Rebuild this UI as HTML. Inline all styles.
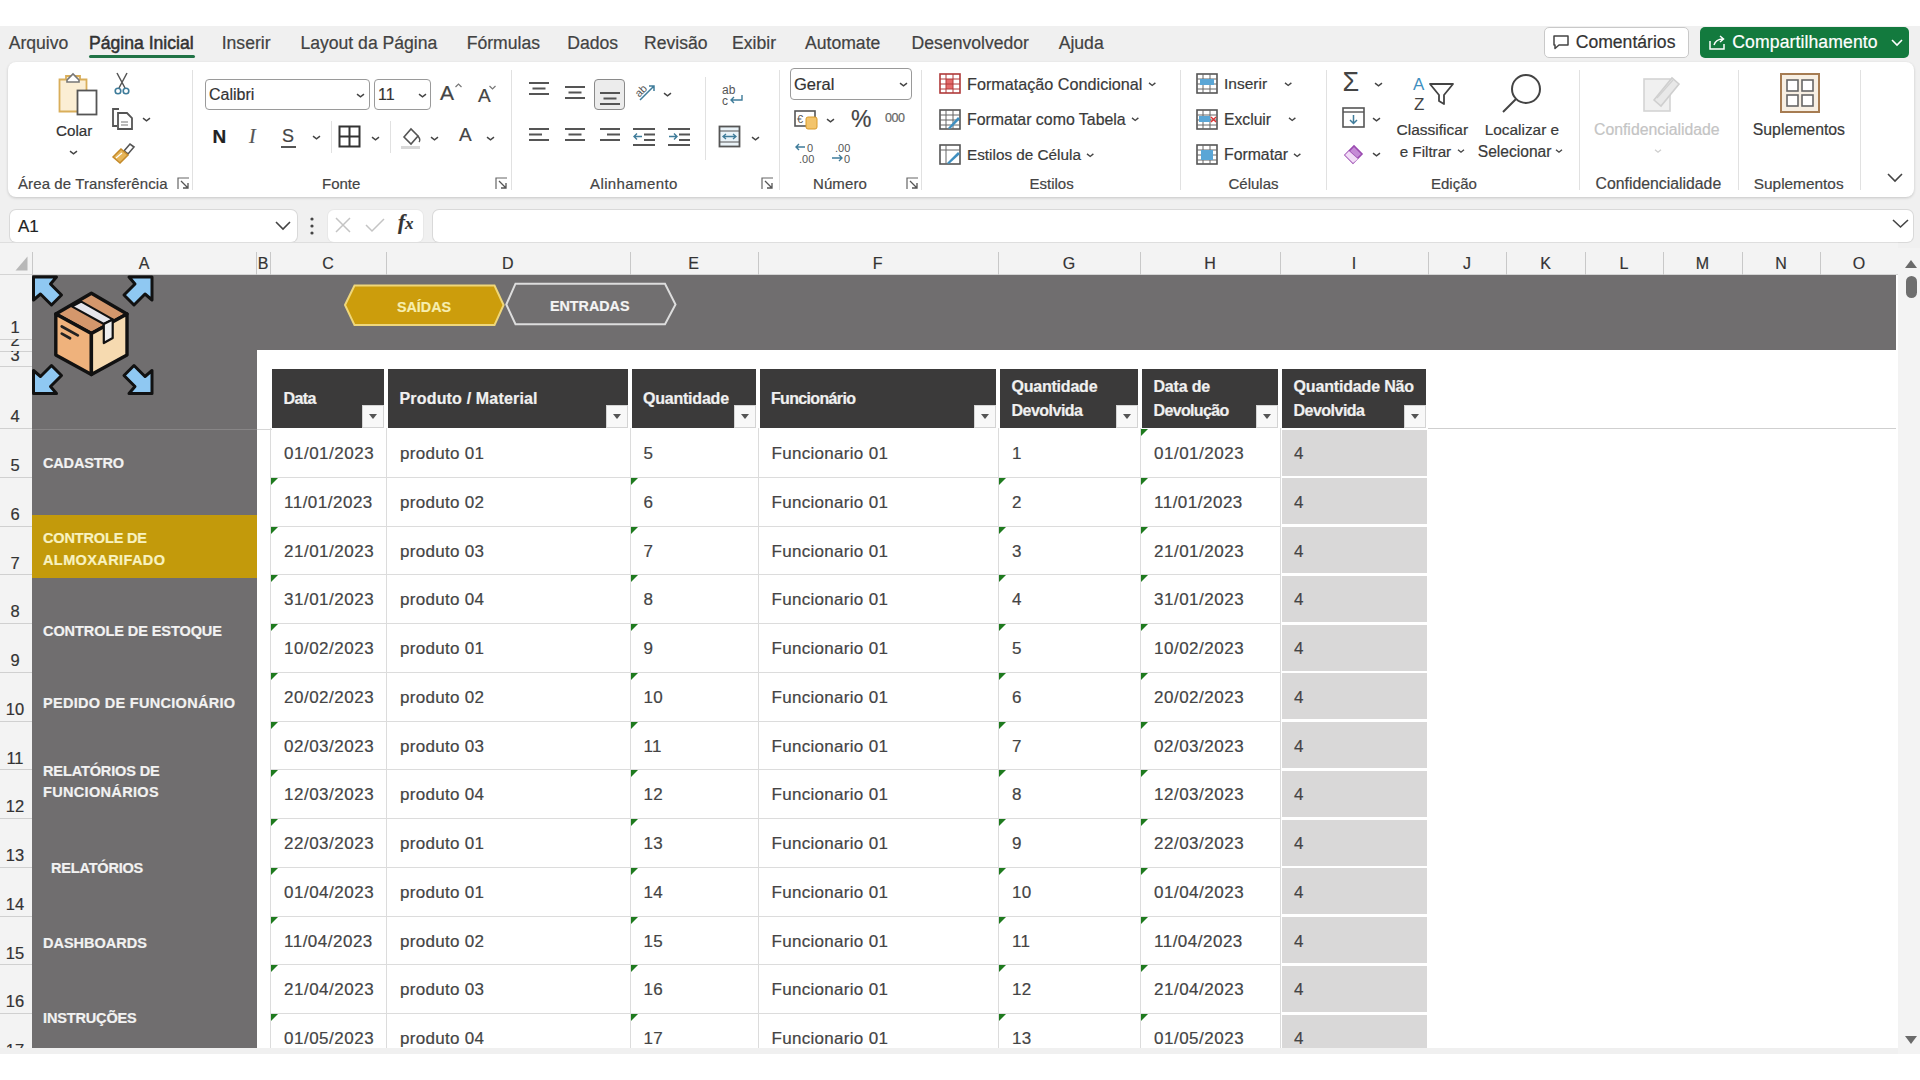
<!DOCTYPE html><html><head><meta charset='utf-8'><style>
*{margin:0;padding:0;box-sizing:border-box}
html,body{width:1920px;height:1080px;overflow:hidden;background:#fff;font-family:"Liberation Sans", sans-serif;}
.a{position:absolute}
.t{position:absolute;white-space:nowrap;line-height:1;-webkit-text-stroke:0.2px currentColor}
</style></head><body>
<div class='a' style='left:0;top:26px;width:1920px;height:1028px;background:#f0f0f0'></div>
<div class='t' style='left:8.7px;top:34.5px;font-size:17.6px;color:#424242;-webkit-text-stroke:0.2px #424242'>Arquivo</div>
<div class='t' style='left:89px;top:34.5px;font-size:17.6px;color:#424242;-webkit-text-stroke:0.2px #424242;-webkit-text-stroke:0.5px #333;color:#333'>Página Inicial</div>
<div class='t' style='left:221.7px;top:34.5px;font-size:17.6px;color:#424242;-webkit-text-stroke:0.2px #424242'>Inserir</div>
<div class='t' style='left:300.4px;top:34.5px;font-size:17.6px;color:#424242;-webkit-text-stroke:0.2px #424242'>Layout da Página</div>
<div class='t' style='left:466.7px;top:34.5px;font-size:17.6px;color:#424242;-webkit-text-stroke:0.2px #424242'>Fórmulas</div>
<div class='t' style='left:567.2px;top:34.5px;font-size:17.6px;color:#424242;-webkit-text-stroke:0.2px #424242'>Dados</div>
<div class='t' style='left:644px;top:34.5px;font-size:17.6px;color:#424242;-webkit-text-stroke:0.2px #424242'>Revisão</div>
<div class='t' style='left:732px;top:34.5px;font-size:17.6px;color:#424242;-webkit-text-stroke:0.2px #424242'>Exibir</div>
<div class='t' style='left:805px;top:34.5px;font-size:17.6px;color:#424242;-webkit-text-stroke:0.2px #424242'>Automate</div>
<div class='t' style='left:911.6px;top:34.5px;font-size:17.6px;color:#424242;-webkit-text-stroke:0.2px #424242'>Desenvolvedor</div>
<div class='t' style='left:1058.7px;top:34.5px;font-size:17.6px;color:#424242;-webkit-text-stroke:0.2px #424242'>Ajuda</div>
<div class='a' style='left:89px;top:55px;width:106px;height:3px;background:#217346;border-radius:2px'></div>
<div class='a' style='left:8px;top:62px;width:1906px;height:135px;background:#fff;border-radius:8px;box-shadow:0 1px 3px rgba(0,0,0,0.18)'></div>
<div class='t' style='left:18px;top:176px;font-size:15px;color:#444;letter-spacing:0.1px'>Área de Transferência</div>
<svg class='a' style='left:176.5px;top:177px;' width='13' height='13' viewBox='0 0 13 13'><path d='M1 12 V1 H12' fill='none' stroke='#666' stroke-width='1.2'/><path d='M4 4 L11 11 M11 6 V11 H6' fill='none' stroke='#555' stroke-width='1.3'/></svg>
<div class='t' style='left:322px;top:176px;font-size:15px;color:#444'>Fonte</div>
<svg class='a' style='left:495px;top:177px;' width='13' height='13' viewBox='0 0 13 13'><path d='M1 12 V1 H12' fill='none' stroke='#666' stroke-width='1.2'/><path d='M4 4 L11 11 M11 6 V11 H6' fill='none' stroke='#555' stroke-width='1.3'/></svg>
<div class='t' style='left:590px;top:176px;font-size:15px;color:#444;letter-spacing:0.4px'>Alinhamento</div>
<svg class='a' style='left:761px;top:177px;' width='13' height='13' viewBox='0 0 13 13'><path d='M1 12 V1 H12' fill='none' stroke='#666' stroke-width='1.2'/><path d='M4 4 L11 11 M11 6 V11 H6' fill='none' stroke='#555' stroke-width='1.3'/></svg>
<div class='t' style='left:813px;top:176px;font-size:15px;color:#444;letter-spacing:0.1px'>Número</div>
<svg class='a' style='left:906px;top:177px;' width='13' height='13' viewBox='0 0 13 13'><path d='M1 12 V1 H12' fill='none' stroke='#666' stroke-width='1.2'/><path d='M4 4 L11 11 M11 6 V11 H6' fill='none' stroke='#555' stroke-width='1.3'/></svg>
<div class='t' style='left:1029.5px;top:176px;font-size:15px;color:#444'>Estilos</div>
<div class='t' style='left:1228.5px;top:176px;font-size:15px;color:#444'>Células</div>
<div class='t' style='left:1431px;top:176px;font-size:15px;color:#444'>Edição</div>
<div class='t' style='left:1595.6px;top:176px;font-size:15px;color:#444;font-size:15.8px'>Confidencialidade</div>
<div class='t' style='left:1753.75px;top:176px;font-size:15px;color:#444;font-size:15.4px'>Suplementos</div>
<svg class='a' style='left:1885px;top:172px;' width='20' height='12' viewBox='0 0 20 12'><path d='M3 2 L10 9 L17 2' fill='none' stroke='#444' stroke-width='1.6'/></svg>
<div class='a' style='left:191.6px;top:70px;width:1px;height:120px;background:#e1e1e1'></div>
<div class='a' style='left:511px;top:70px;width:1px;height:120px;background:#e1e1e1'></div>
<div class='a' style='left:778.6px;top:70px;width:1px;height:120px;background:#e1e1e1'></div>
<div class='a' style='left:921px;top:70px;width:1px;height:120px;background:#e1e1e1'></div>
<div class='a' style='left:1180px;top:70px;width:1px;height:120px;background:#e1e1e1'></div>
<div class='a' style='left:1326px;top:70px;width:1px;height:120px;background:#e1e1e1'></div>
<div class='a' style='left:1579px;top:70px;width:1px;height:120px;background:#e1e1e1'></div>
<div class='a' style='left:1738px;top:70px;width:1px;height:120px;background:#e1e1e1'></div>
<div class='a' style='left:1860px;top:70px;width:1px;height:120px;background:#e1e1e1'></div>
<svg class='a' style='left:56px;top:71px;' width='44' height='46' viewBox='0 0 44 46'><path d='M3.5 8.5 H10 V5 H24 V8.5 H30.5 V40.5 H3.5 Z' fill='#fbeed4' stroke='#d9ae5a' stroke-width='1.8'/><path d='M11 9 L17 3 L23 9 V11 H11 Z' fill='#fff' stroke='#777' stroke-width='1.6'/><rect x='21.5' y='19.5' width='19' height='24' fill='#fff' stroke='#555' stroke-width='1.8'/></svg>
<div class='t' style='left:56px;top:123px;font-size:15.2px;color:#333'>Colar</div>
<svg class='a' style='left:68.5px;top:148.5px;' width='9.0' height='7.0' viewBox='0 0 9.0 7.0'><path d='M1 2.1 L4.5 4.8999999999999995 L8.0 2.1' fill='none' stroke='#444' stroke-width='1.4'/></svg>
<svg class='a' style='left:113px;top:72px;' width='18' height='24' viewBox='0 0 18 24'><path d='M4 1 L12 16 M14 1 L6 16' stroke='#555' stroke-width='1.5' fill='none'/><circle cx='5' cy='19' r='2.8' fill='none' stroke='#3f7c9a' stroke-width='1.6'/><circle cx='13' cy='19' r='2.8' fill='none' stroke='#3f7c9a' stroke-width='1.6'/></svg>
<svg class='a' style='left:110px;top:107px;' width='26' height='24' viewBox='0 0 26 24'><path d='M9 2 H3 V19 H7' fill='none' stroke='#555' stroke-width='1.8'/><path d='M8 6 H17 L22 11 V22 H8 Z' fill='#fff' stroke='#555' stroke-width='1.8'/><path d='M11 15 H18 M11 18 H18' stroke='#777' stroke-width='1.2'/></svg>
<svg class='a' style='left:142.0px;top:115.5px;' width='9.0' height='7.0' viewBox='0 0 9.0 7.0'><path d='M1 2.1 L4.5 4.8999999999999995 L8.0 2.1' fill='none' stroke='#444' stroke-width='1.4'/></svg>
<svg class='a' style='left:110px;top:141px;' width='26' height='24' viewBox='0 0 26 24'><path d='M14 10 L20 3 L24 6 L18 13 Z' fill='#fff' stroke='#555' stroke-width='1.6'/><path d='M3 16 L11 8 L18 14 L10 22 Z' fill='#e6b558' stroke='#c48a2a' stroke-width='1.5'/><path d='M6 17 L12 12' stroke='#fff' stroke-width='1.2'/></svg>
<div class='a' style='left:205px;top:79px;width:165px;height:31px;border:1px solid #9a9a9a;border-radius:4px;background:#fff'></div>
<div class='t' style='left:209px;top:86.5px;font-size:16px;color:#333'>Calibri</div>
<svg class='a' style='left:355.5px;top:91.5px;' width='9.0' height='7.0' viewBox='0 0 9.0 7.0'><path d='M1 2.1 L4.5 4.8999999999999995 L8.0 2.1' fill='none' stroke='#444' stroke-width='1.4'/></svg>
<div class='a' style='left:373.5px;top:79px;width:57px;height:31px;border:1px solid #9a9a9a;border-radius:4px;background:#fff'></div>
<div class='t' style='left:378px;top:86.5px;font-size:16px;color:#333'>11</div>
<svg class='a' style='left:417.5px;top:91.5px;' width='9.0' height='7.0' viewBox='0 0 9.0 7.0'><path d='M1 2.1 L4.5 4.8999999999999995 L8.0 2.1' fill='none' stroke='#444' stroke-width='1.4'/></svg>
<div class='t' style='left:440px;top:82px;font-size:21px;color:#444'>A</div>
<svg class='a' style='left:454px;top:82px;' width='9' height='7' viewBox='0 0 9 7'><path d='M1.5 5 L4.5 2 L7.5 5' fill='none' stroke='#777' stroke-width='1.2'/></svg>
<div class='t' style='left:478px;top:86px;font-size:19px;color:#444'>A</div>
<svg class='a' style='left:488px;top:84px;' width='9' height='7' viewBox='0 0 9 7'><path d='M1.5 2 L4.5 5 L7.5 2' fill='none' stroke='#777' stroke-width='1.2'/></svg>
<div class='t' style='left:212.5px;top:127px;font-size:19px;font-weight:bold;color:#222'>N</div>
<div class='t' style='left:249px;top:126px;font-size:20px;font-family:"Liberation Serif",serif;font-style:italic;color:#555'>I</div>
<div class='t' style='left:282px;top:127px;font-size:18px;color:#444'>S</div>
<div class='a' style='left:281px;top:146px;width:15px;height:2px;background:#555'></div>
<svg class='a' style='left:311.5px;top:133.5px;' width='9.0' height='7.0' viewBox='0 0 9.0 7.0'><path d='M1 2.1 L4.5 4.8999999999999995 L8.0 2.1' fill='none' stroke='#444' stroke-width='1.4'/></svg>
<div class='a' style='left:331px;top:121px;width:1px;height:32px;background:#e1e1e1'></div>
<svg class='a' style='left:338px;top:125px;' width='23' height='23' viewBox='0 0 23 23'><rect x='1.5' y='1.5' width='20' height='20' fill='none' stroke='#333' stroke-width='2'/><path d='M11.5 1.5 V21.5 M1.5 11.5 H21.5' stroke='#333' stroke-width='2'/></svg>
<svg class='a' style='left:370.5px;top:134.5px;' width='9.0' height='7.0' viewBox='0 0 9.0 7.0'><path d='M1 2.1 L4.5 4.8999999999999995 L8.0 2.1' fill='none' stroke='#444' stroke-width='1.4'/></svg>
<div class='a' style='left:390px;top:121px;width:1px;height:32px;background:#e1e1e1'></div>
<svg class='a' style='left:398px;top:124px;' width='26' height='26' viewBox='0 0 26 26'><path d='M6 13 L13 5 L20 12 L13 20 Z' fill='#fff' stroke='#555' stroke-width='1.6'/><path d='M20 12 Q23 16 21 18' fill='none' stroke='#555' stroke-width='1.4'/><rect x='3' y='22' width='19' height='3' fill='#d8d8d8'/></svg>
<svg class='a' style='left:429.5px;top:134.5px;' width='9.0' height='7.0' viewBox='0 0 9.0 7.0'><path d='M1 2.1 L4.5 4.8999999999999995 L8.0 2.1' fill='none' stroke='#444' stroke-width='1.4'/></svg>
<div class='t' style='left:459px;top:125px;font-size:19px;color:#444'>A</div>
<svg class='a' style='left:485.5px;top:134.5px;' width='9.0' height='7.0' viewBox='0 0 9.0 7.0'><path d='M1 2.1 L4.5 4.8999999999999995 L8.0 2.1' fill='none' stroke='#444' stroke-width='1.4'/></svg>
<svg class='a' style='left:529px;top:82px;' width='22' height='18' viewBox='0 0 22 18'><rect x='0' y='0.0' width='20' height='2' fill='#555'/><rect x='3.5' y='5.5' width='13' height='2' fill='#555'/><rect x='0' y='11.0' width='20' height='2' fill='#555'/></svg>
<svg class='a' style='left:565px;top:86px;' width='22' height='18' viewBox='0 0 22 18'><rect x='0' y='0.0' width='20' height='2' fill='#555'/><rect x='3.5' y='5.5' width='13' height='2' fill='#555'/><rect x='0' y='11.0' width='20' height='2' fill='#555'/></svg>
<div class='a' style='left:594px;top:79px;width:31px;height:31px;border:1px solid #8a8a8a;border-radius:4px;background:#ececec'></div>
<svg class='a' style='left:600px;top:92px;' width='22' height='18' viewBox='0 0 22 18'><rect x='0' y='0.0' width='20' height='2' fill='#555'/><rect x='3.5' y='5.5' width='13' height='2' fill='#555'/><rect x='0' y='11.0' width='20' height='2' fill='#555'/></svg>
<svg class='a' style='left:632px;top:80px;' width='26' height='22' viewBox='0 0 26 22'><text x='2' y='15' font-size='11' fill='#555' transform='rotate(-45 8 10)' font-family='Liberation Sans'>ab</text><path d='M8 20 L22 6 M17 6 H22 V11' fill='none' stroke='#3f7c9a' stroke-width='1.5'/></svg>
<svg class='a' style='left:662.5px;top:90.5px;' width='9.0' height='7.0' viewBox='0 0 9.0 7.0'><path d='M1 2.1 L4.5 4.8999999999999995 L8.0 2.1' fill='none' stroke='#444' stroke-width='1.4'/></svg>
<svg class='a' style='left:529px;top:128px;' width='22' height='18' viewBox='0 0 22 18'><rect x='0' y='0.0' width='20' height='2' fill='#555'/><rect x='0' y='5.5' width='13' height='2' fill='#555'/><rect x='0' y='11.0' width='20' height='2' fill='#555'/></svg>
<svg class='a' style='left:565px;top:128px;' width='22' height='18' viewBox='0 0 22 18'><rect x='0' y='0.0' width='20' height='2' fill='#555'/><rect x='3.5' y='5.5' width='13' height='2' fill='#555'/><rect x='0' y='11.0' width='20' height='2' fill='#555'/></svg>
<svg class='a' style='left:600px;top:128px;' width='22' height='18' viewBox='0 0 22 18'><rect x='0' y='0.0' width='20' height='2' fill='#555'/><rect x='7' y='5.5' width='13' height='2' fill='#555'/><rect x='0' y='11.0' width='20' height='2' fill='#555'/></svg>
<svg class='a' style='left:633px;top:128px;' width='24' height='18' viewBox='0 0 24 18'><rect x='0' y='0' width='22' height='2' fill='#555'/><rect x='11' y='5.5' width='11' height='2' fill='#555'/><rect x='11' y='11' width='11' height='2' fill='#555'/><rect x='0' y='16' width='22' height='2' fill='#555'/><path d='M9 8.5 H1 M4 5.5 L1 8.5 L4 11.5' fill='none' stroke='#3f7c9a' stroke-width='1.4'/></svg>
<svg class='a' style='left:668px;top:128px;' width='24' height='18' viewBox='0 0 24 18'><rect x='0' y='0' width='22' height='2' fill='#555'/><rect x='11' y='5.5' width='11' height='2' fill='#555'/><rect x='11' y='11' width='11' height='2' fill='#555'/><rect x='0' y='16' width='22' height='2' fill='#555'/><path d='M1 8.5 H9 M6 5.5 L9 8.5 L6 11.5' fill='none' stroke='#3f7c9a' stroke-width='1.4'/></svg>
<div class='a' style='left:705px;top:77px;width:1px;height:83px;background:#e1e1e1'></div>
<svg class='a' style='left:720px;top:83px;' width='26' height='24' viewBox='0 0 26 24'><text x='2' y='11' font-size='12' fill='#555' font-family='Liberation Sans'>ab</text><text x='2' y='22' font-size='12' fill='#555' font-family='Liberation Sans'>c</text><path d='M22 12 V17 H11 M14 14 L11 17 L14 20' fill='none' stroke='#3f7c9a' stroke-width='1.4'/></svg>
<svg class='a' style='left:718px;top:125px;' width='24' height='24' viewBox='0 0 24 24'><rect x='1.5' y='1.5' width='20' height='20' fill='#eaf3f8' stroke='#555' stroke-width='1.8'/><path d='M1.5 6 H21.5 M1.5 17 H21.5' stroke='#555' stroke-width='1.2'/><path d='M5 11.5 H18 M8 9 L5 11.5 L8 14 M15 9 L18 11.5 L15 14' fill='none' stroke='#3f7c9a' stroke-width='1.3'/></svg>
<svg class='a' style='left:750.5px;top:134.5px;' width='9.0' height='7.0' viewBox='0 0 9.0 7.0'><path d='M1 2.1 L4.5 4.8999999999999995 L8.0 2.1' fill='none' stroke='#444' stroke-width='1.4'/></svg>
<div class='a' style='left:790px;top:68px;width:122px;height:32px;border:1px solid #9a9a9a;border-radius:4px;background:#fff'></div>
<div class='t' style='left:794px;top:75.5px;font-size:16.5px;color:#333'>Geral</div>
<svg class='a' style='left:898.5px;top:80.5px;' width='9.0' height='7.0' viewBox='0 0 9.0 7.0'><path d='M1 2.1 L4.5 4.8999999999999995 L8.0 2.1' fill='none' stroke='#444' stroke-width='1.4'/></svg>
<svg class='a' style='left:794px;top:109px;' width='26' height='22' viewBox='0 0 26 22'><rect x='1' y='2' width='20' height='15' fill='#fff' stroke='#555' stroke-width='1.6'/><text x='3' y='14' font-size='11' fill='#555' font-family='Liberation Sans'>€</text><rect x='12' y='8' width='11' height='12' rx='2' fill='#f3c46b' stroke='#d89a2a' stroke-width='1'/></svg>
<svg class='a' style='left:825.5px;top:116.5px;' width='9.0' height='7.0' viewBox='0 0 9.0 7.0'><path d='M1 2.1 L4.5 4.8999999999999995 L8.0 2.1' fill='none' stroke='#444' stroke-width='1.4'/></svg>
<div class='t' style='left:851px;top:107.5px;font-size:23px;color:#444'>%</div>
<div class='t' style='left:885px;top:112px;font-size:12.5px;color:#666;letter-spacing:-0.5px'>000</div>
<svg class='a' style='left:794px;top:141px;' width='26' height='24' viewBox='0 0 26 24'><text x='13' y='11' font-size='11' fill='#555' font-family='Liberation Sans'>0</text><text x='5' y='22' font-size='11' fill='#555' font-family='Liberation Sans'>.00</text><path d='M2 6 H11 M5 3 L2 6 L5 9' fill='none' stroke='#3f7c9a' stroke-width='1.4'/></svg>
<svg class='a' style='left:829px;top:141px;' width='26' height='24' viewBox='0 0 26 24'><text x='6' y='11' font-size='11' fill='#555' font-family='Liberation Sans'>.00</text><text x='15' y='22' font-size='11' fill='#555' font-family='Liberation Sans'>0</text><path d='M3 17 H13 M10 14 L13 17 L10 20' fill='none' stroke='#3f7c9a' stroke-width='1.4'/></svg>
<svg class='a' style='left:939px;top:73px;' width='23' height='22' viewBox='0 0 23 22'><rect x='1' y='1' width='20' height='19' fill='#fff' stroke='#b03a3a' stroke-width='1.6'/><rect x='7' y='6' width='7' height='10' fill='#e56a6a'/><path d='M1 6 H21 M1 11 H21 M1 16 H21 M7 1 V20 M14 1 V20' stroke='#b03a3a' stroke-width='1'/></svg>
<div class='t' style='left:967px;top:76px;font-size:16.2px;color:#3a3a3a'>Formatação Condicional</div>
<svg class='a' style='left:1147.8px;top:80.8px;' width='8.4' height='6.4' viewBox='0 0 8.4 6.4'><path d='M1 1.92 L4.2 4.4799999999999995 L7.4 1.92' fill='none' stroke='#444' stroke-width='1.4'/></svg>
<svg class='a' style='left:939px;top:108.5px;' width='23' height='22' viewBox='0 0 23 22'><rect x='1' y='1' width='20' height='19' fill='#fff' stroke='#555' stroke-width='1.6'/><path d='M1 6 H21 M1 11 H21 M1 16 H21 M7 1 V20 M14 1 V20' stroke='#666' stroke-width='1'/><path d='M9 19 L19 8 L21 10 L11 20 Z' fill='#3f8fc0'/></svg>
<div class='t' style='left:967px;top:111.5px;font-size:15.9px;color:#3a3a3a'>Formatar como Tabela</div>
<svg class='a' style='left:1130.8px;top:116.3px;' width='8.4' height='6.4' viewBox='0 0 8.4 6.4'><path d='M1 1.92 L4.2 4.4799999999999995 L7.4 1.92' fill='none' stroke='#444' stroke-width='1.4'/></svg>
<svg class='a' style='left:939px;top:144px;' width='23' height='22' viewBox='0 0 23 22'><rect x='1' y='1' width='20' height='19' fill='#fff' stroke='#555' stroke-width='1.6'/><path d='M1 6 H21 M7 1 V20' stroke='#666' stroke-width='1'/><path d='M8 19 L19 8 L21 10 L10 20 Z' fill='#3f8fc0'/></svg>
<div class='t' style='left:967px;top:147px;font-size:15.3px;color:#3a3a3a'>Estilos de Célula</div>
<svg class='a' style='left:1085.8px;top:151.8px;' width='8.4' height='6.4' viewBox='0 0 8.4 6.4'><path d='M1 1.92 L4.2 4.4799999999999995 L7.4 1.92' fill='none' stroke='#444' stroke-width='1.4'/></svg>
<svg class='a' style='left:1196px;top:73px;' width='23' height='22' viewBox='0 0 23 22'><rect x='1' y='1' width='20' height='19' fill='#fff' stroke='#555' stroke-width='1.6'/><path d='M1 6 H21 M1 11 H21 M1 16 H21 M7 1 V20 M14 1 V20' stroke='#666' stroke-width='1'/><rect x='4' y='6' width='14' height='6' fill='#5aa6d6'/></svg>
<div class='t' style='left:1224px;top:76px;font-size:15.5px;color:#3a3a3a'>Inserir</div>
<svg class='a' style='left:1283.8px;top:80.8px;' width='8.4' height='6.4' viewBox='0 0 8.4 6.4'><path d='M1 1.92 L4.2 4.4799999999999995 L7.4 1.92' fill='none' stroke='#444' stroke-width='1.4'/></svg>
<svg class='a' style='left:1196px;top:108.5px;' width='23' height='22' viewBox='0 0 23 22'><rect x='1' y='1' width='20' height='19' fill='#fff' stroke='#555' stroke-width='1.6'/><path d='M1 6 H21 M1 11 H21 M1 16 H21 M7 1 V20 M14 1 V20' stroke='#666' stroke-width='1'/><rect x='3' y='7' width='11' height='6' fill='#5aa6d6'/><path d='M15 8 L20 13 M20 8 L15 13' stroke='#d33' stroke-width='1.4'/></svg>
<div class='t' style='left:1224px;top:111.5px;font-size:15.7px;color:#3a3a3a'>Excluir</div>
<svg class='a' style='left:1287.8px;top:116.3px;' width='8.4' height='6.4' viewBox='0 0 8.4 6.4'><path d='M1 1.92 L4.2 4.4799999999999995 L7.4 1.92' fill='none' stroke='#444' stroke-width='1.4'/></svg>
<svg class='a' style='left:1196px;top:144px;' width='23' height='22' viewBox='0 0 23 22'><rect x='1' y='1' width='20' height='19' fill='#fff' stroke='#555' stroke-width='1.6'/><path d='M1 6 H21 M1 11 H21 M1 16 H21 M7 1 V20 M14 1 V20' stroke='#666' stroke-width='1'/><rect x='5' y='6' width='12' height='10' fill='#5aa6d6'/></svg>
<div class='t' style='left:1224px;top:147px;font-size:15.8px;color:#3a3a3a'>Formatar</div>
<svg class='a' style='left:1292.8px;top:151.8px;' width='8.4' height='6.4' viewBox='0 0 8.4 6.4'><path d='M1 1.92 L4.2 4.4799999999999995 L7.4 1.92' fill='none' stroke='#444' stroke-width='1.4'/></svg>
<div class='t' style='left:1342.5px;top:69px;font-size:27px;color:#444;-webkit-text-stroke:0'>Σ</div>
<svg class='a' style='left:1373.5px;top:80.5px;' width='9.0' height='7.0' viewBox='0 0 9.0 7.0'><path d='M1 2.1 L4.5 4.8999999999999995 L8.0 2.1' fill='none' stroke='#444' stroke-width='1.4'/></svg>
<svg class='a' style='left:1342px;top:107px;' width='24' height='22' viewBox='0 0 24 22'><rect x='1' y='1' width='21' height='19' fill='#fff' stroke='#555' stroke-width='1.6'/><path d='M1 5 H22' stroke='#555' stroke-width='1.4'/><path d='M11.5 8 V16 M8 13 L11.5 16.5 L15 13' fill='none' stroke='#3f7c9a' stroke-width='1.5'/></svg>
<svg class='a' style='left:1371.5px;top:115.5px;' width='9.0' height='7.0' viewBox='0 0 9.0 7.0'><path d='M1 2.1 L4.5 4.8999999999999995 L8.0 2.1' fill='none' stroke='#444' stroke-width='1.4'/></svg>
<svg class='a' style='left:1342px;top:141px;' width='24' height='24' viewBox='0 0 24 24'><path d='M3 14 L12 5 L20 13 L11 22 Z' fill='#c58bd6' stroke='#9a4ab0' stroke-width='1.6'/><path d='M7 10 L16 18' stroke='#9a4ab0' stroke-width='1.4'/><path d='M3 14 L7 10 L16 18 L11 22 Z' fill='#f2dcf7'/></svg>
<svg class='a' style='left:1371.5px;top:150.5px;' width='9.0' height='7.0' viewBox='0 0 9.0 7.0'><path d='M1 2.1 L4.5 4.8999999999999995 L8.0 2.1' fill='none' stroke='#444' stroke-width='1.4'/></svg>
<svg class='a' style='left:1412px;top:74px;' width='44' height='38' viewBox='0 0 44 38'><text x='1' y='16' font-size='17' fill='#3f8fc0' font-family='Liberation Sans'>A</text><text x='2' y='36' font-size='17' fill='#444' font-family='Liberation Sans'>Z</text><path d='M18 10 H41 L32 21 V30 L27 27 V21 Z' fill='#fff' stroke='#444' stroke-width='1.8' stroke-linejoin='round'/></svg>
<div class='t' style='left:1396.6px;top:121.5px;font-size:15.5px;color:#3a3a3a'>Classificar</div>
<div class='t' style='left:1399.7px;top:143.5px;font-size:15.2px;color:#3a3a3a'>e Filtrar</div>
<svg class='a' style='left:1456.5px;top:148px;' width='8' height='6' viewBox='0 0 8 6'><path d='M1 1.7999999999999998 L4 4.199999999999999 L7 1.7999999999999998' fill='none' stroke='#444' stroke-width='1.4'/></svg>
<svg class='a' style='left:1500px;top:72px;' width='46' height='42' viewBox='0 0 46 42'><circle cx='26' cy='17' r='14' fill='none' stroke='#444' stroke-width='2'/><path d='M16 27 L3 40' stroke='#444' stroke-width='2'/></svg>
<div class='t' style='left:1484.7px;top:121.5px;font-size:15.4px;color:#3a3a3a'>Localizar e</div>
<div class='t' style='left:1477.8px;top:143.5px;font-size:15.6px;color:#3a3a3a'>Selecionar</div>
<svg class='a' style='left:1555px;top:148px;' width='8' height='6' viewBox='0 0 8 6'><path d='M1 1.7999999999999998 L4 4.199999999999999 L7 1.7999999999999998' fill='none' stroke='#444' stroke-width='1.4'/></svg>
<svg class='a' style='left:1640px;top:70px;' width='42' height='44' viewBox='0 0 42 44'><rect x='4' y='9' width='26' height='32' fill='#f0f0f0' stroke='#d4d4d4' stroke-width='1.6'/><path d='M14 30 L32 8 L39 14 L21 36 Z' fill='#e8e8e8' stroke='#cfcfcf' stroke-width='1.6'/><path d='M17 28 L33 10' stroke='#d0d0d0' stroke-width='1.2'/></svg>
<div class='t' style='left:1594px;top:121.5px;font-size:15.8px;color:#c4c4c4'>Confidencialidade</div>
<svg class='a' style='left:1654px;top:148px;' width='8' height='6' viewBox='0 0 8 6'><path d='M1 1.7999999999999998 L4 4.199999999999999 L7 1.7999999999999998' fill='none' stroke='#cfcfcf' stroke-width='1.4'/></svg>
<svg class='a' style='left:1779px;top:72px;' width='42' height='42' viewBox='0 0 42 42'><rect x='2' y='2' width='38' height='38' fill='#f7efe3' stroke='#a67c52' stroke-width='2'/><rect x='8' y='8' width='11' height='11' fill='#fff' stroke='#666' stroke-width='1.6'/><rect x='23' y='8' width='11' height='11' fill='#fff' stroke='#666' stroke-width='1.6'/><rect x='8' y='23' width='11' height='11' fill='#fff' stroke='#666' stroke-width='1.6'/><rect x='23' y='23' width='11' height='11' fill='#fff' stroke='#666' stroke-width='1.6'/></svg>
<div class='t' style='left:1752.8px;top:121.5px;font-size:15.8px;color:#3a3a3a'>Suplementos</div>
<div class='a' style='left:1543.5px;top:26.5px;width:145px;height:31px;border:1px solid #c9c9c9;border-radius:5px;background:#fff'></div>
<svg class='a' style='left:1552px;top:34px;' width='18' height='16' viewBox='0 0 18 16'><path d='M2 2 H16 V11 H7 L3 14.5 V11 H2 Z' fill='none' stroke='#444' stroke-width='1.5' stroke-linejoin='round'/></svg>
<div class='t' style='left:1575.7px;top:34px;font-size:17.6px;color:#333'>Comentários</div>
<div class='a' style='left:1699.5px;top:26.5px;width:209px;height:31px;border-radius:5px;background:#137a3e'></div>
<svg class='a' style='left:1708px;top:33px;' width='20' height='18' viewBox='0 0 20 18'><path d='M2 8 V16 H16 V11' fill='none' stroke='#fff' stroke-width='1.5'/><path d='M6 12 Q8 6 15 6 M12 3 L15.5 6 L12 9' fill='none' stroke='#fff' stroke-width='1.5'/></svg>
<div class='t' style='left:1732.3px;top:34px;font-size:17.6px;color:#fff;letter-spacing:0.1px'>Compartilhamento</div>
<svg class='a' style='left:1890px;top:38px;' width='14' height='9' viewBox='0 0 14 9'><path d='M2 2 L7 7 L12 2' fill='none' stroke='#fff' stroke-width='1.6'/></svg>
<div class='a' style='left:10px;top:210px;width:287px;height:32px;background:#fff;border-radius:6px;box-shadow:0 0 0 1px #d9d9d9'></div>
<div class='t' style='left:18px;top:218px;font-size:17px;color:#222'>A1</div>
<div class='a' style='left:328px;top:210px;width:95px;height:32px;background:#fff;border-radius:6px;box-shadow:0 0 0 1px #e8e8e8'></div>
<div class='a' style='left:433px;top:210px;width:1480px;height:32px;background:#fff;border-radius:6px;box-shadow:0 0 0 1px #d9d9d9'></div>
<svg class='a' style='left:274px;top:219px;' width='18' height='12' viewBox='0 0 18 12'><path d='M2 3 L9 10 L16 3' fill='none' stroke='#444' stroke-width='1.6'/></svg>
<svg class='a' style='left:309px;top:216px;' width='6' height='20' viewBox='0 0 6 20'><circle cx='3' cy='3' r='1.6' fill='#444'/><circle cx='3' cy='10' r='1.6' fill='#444'/><circle cx='3' cy='17' r='1.6' fill='#444'/></svg>
<svg class='a' style='left:334px;top:216px;' width='18' height='18' viewBox='0 0 18 18'><path d='M2 2 L16 16 M16 2 L2 16' stroke='#c4c4c4' stroke-width='1.5'/></svg>
<svg class='a' style='left:364px;top:217px;' width='22' height='16' viewBox='0 0 22 16'><path d='M2 8 L8 14 L20 2' fill='none' stroke='#c4c4c4' stroke-width='1.5'/></svg>
<div class='t' style='left:398px;top:212px;font-size:21px;font-family:"Liberation Serif",serif;color:#333;font-weight:bold'><i>f</i><i style='font-size:17px'>x</i></div>
<svg class='a' style='left:1891px;top:218px;' width='20' height='12' viewBox='0 0 20 12'><path d='M2 2 L9.5 9 L17 2' fill='none' stroke='#444' stroke-width='1.6'/></svg>
<div class='a' style='left:0;top:242px;width:1898px;height:33px;background:#f3f3f3;border-top:1px solid #dedede;border-bottom:1px solid #d4d4d4'></div>
<svg class='a' style='left:15px;top:256px;' width='13' height='15' viewBox='0 0 13 15'><path d='M12.5 0.5 V14.5 H0.5 Z' fill='#b8b8b8'/></svg>
<div class='a' style='left:32px;top:252px;width:1px;height:23px;background:#c8c8c8'></div>
<div class='t' style='left:32px;width:224px;text-align:center;top:256px;font-size:16px;color:#333'>A</div>
<div class='a' style='left:256px;top:252px;width:1px;height:23px;background:#c8c8c8'></div>
<div class='t' style='left:256px;width:14px;text-align:center;top:256px;font-size:16px;color:#333'>B</div>
<div class='a' style='left:270px;top:252px;width:1px;height:23px;background:#c8c8c8'></div>
<div class='t' style='left:270px;width:116px;text-align:center;top:256px;font-size:16px;color:#333'>C</div>
<div class='a' style='left:386px;top:252px;width:1px;height:23px;background:#c8c8c8'></div>
<div class='t' style='left:386px;width:243.5px;text-align:center;top:256px;font-size:16px;color:#333'>D</div>
<div class='a' style='left:629.5px;top:252px;width:1px;height:23px;background:#c8c8c8'></div>
<div class='t' style='left:629.5px;width:128.0px;text-align:center;top:256px;font-size:16px;color:#333'>E</div>
<div class='a' style='left:757.5px;top:252px;width:1px;height:23px;background:#c8c8c8'></div>
<div class='t' style='left:757.5px;width:240.5px;text-align:center;top:256px;font-size:16px;color:#333'>F</div>
<div class='a' style='left:998px;top:252px;width:1px;height:23px;background:#c8c8c8'></div>
<div class='t' style='left:998px;width:142px;text-align:center;top:256px;font-size:16px;color:#333'>G</div>
<div class='a' style='left:1140px;top:252px;width:1px;height:23px;background:#c8c8c8'></div>
<div class='t' style='left:1140px;width:140px;text-align:center;top:256px;font-size:16px;color:#333'>H</div>
<div class='a' style='left:1280px;top:252px;width:1px;height:23px;background:#c8c8c8'></div>
<div class='t' style='left:1280px;width:148px;text-align:center;top:256px;font-size:16px;color:#333'>I</div>
<div class='a' style='left:1428px;top:252px;width:1px;height:23px;background:#c8c8c8'></div>
<div class='t' style='left:1428px;width:78px;text-align:center;top:256px;font-size:16px;color:#333'>J</div>
<div class='a' style='left:1506px;top:252px;width:1px;height:23px;background:#c8c8c8'></div>
<div class='t' style='left:1506px;width:79px;text-align:center;top:256px;font-size:16px;color:#333'>K</div>
<div class='a' style='left:1585px;top:252px;width:1px;height:23px;background:#c8c8c8'></div>
<div class='t' style='left:1585px;width:78px;text-align:center;top:256px;font-size:16px;color:#333'>L</div>
<div class='a' style='left:1663px;top:252px;width:1px;height:23px;background:#c8c8c8'></div>
<div class='t' style='left:1663px;width:79px;text-align:center;top:256px;font-size:16px;color:#333'>M</div>
<div class='a' style='left:1742px;top:252px;width:1px;height:23px;background:#c8c8c8'></div>
<div class='t' style='left:1742px;width:78px;text-align:center;top:256px;font-size:16px;color:#333'>N</div>
<div class='a' style='left:1820px;top:252px;width:1px;height:23px;background:#c8c8c8'></div>
<div class='t' style='left:1820px;width:78px;text-align:center;top:256px;font-size:16px;color:#333'>O</div>
<div class='a' style='left:0;top:275px;width:32px;height:773px;background:#f3f3f3;overflow:hidden'>
<div class='a' style='left:0;top:63.5px;width:32px;height:1px;background:#d0d0d0'></div>
<div class='a' style='left:0;top:0.0px;width:32px;height:63.5px;overflow:hidden'><div class='t' style='left:0;width:30px;text-align:center;top:44.0px;font-size:16.5px;color:#333'>1</div></div>
<div class='a' style='left:0;top:76.0px;width:32px;height:1px;background:#d0d0d0'></div>
<div class='a' style='left:0;top:63.5px;width:32px;height:12.5px;overflow:hidden'><div class='t' style='left:0;width:30px;text-align:center;top:-7.0px;font-size:16.5px;color:#333'>2</div></div>
<div class='a' style='left:0;top:91.3px;width:32px;height:1px;background:#d0d0d0'></div>
<div class='a' style='left:0;top:76.0px;width:32px;height:15.3px;overflow:hidden'><div class='t' style='left:0;width:30px;text-align:center;top:-4.2px;font-size:16.5px;color:#333'>3</div></div>
<div class='a' style='left:0;top:153.0px;width:32px;height:1px;background:#d0d0d0'></div>
<div class='a' style='left:0;top:91.3px;width:32px;height:61.7px;overflow:hidden'><div class='t' style='left:0;width:30px;text-align:center;top:42.2px;font-size:16.5px;color:#333'>4</div></div>
<div class='a' style='left:0;top:201.8px;width:32px;height:1px;background:#d0d0d0'></div>
<div class='a' style='left:0;top:153.0px;width:32px;height:48.8px;overflow:hidden'><div class='t' style='left:0;width:30px;text-align:center;top:29.2px;font-size:16.5px;color:#333'>5</div></div>
<div class='a' style='left:0;top:250.5px;width:32px;height:1px;background:#d0d0d0'></div>
<div class='a' style='left:0;top:201.8px;width:32px;height:48.8px;overflow:hidden'><div class='t' style='left:0;width:30px;text-align:center;top:29.2px;font-size:16.5px;color:#333'>6</div></div>
<div class='a' style='left:0;top:299.2px;width:32px;height:1px;background:#d0d0d0'></div>
<div class='a' style='left:0;top:250.5px;width:32px;height:48.8px;overflow:hidden'><div class='t' style='left:0;width:30px;text-align:center;top:29.2px;font-size:16.5px;color:#333'>7</div></div>
<div class='a' style='left:0;top:348.0px;width:32px;height:1px;background:#d0d0d0'></div>
<div class='a' style='left:0;top:299.2px;width:32px;height:48.8px;overflow:hidden'><div class='t' style='left:0;width:30px;text-align:center;top:29.2px;font-size:16.5px;color:#333'>8</div></div>
<div class='a' style='left:0;top:396.8px;width:32px;height:1px;background:#d0d0d0'></div>
<div class='a' style='left:0;top:348.0px;width:32px;height:48.8px;overflow:hidden'><div class='t' style='left:0;width:30px;text-align:center;top:29.2px;font-size:16.5px;color:#333'>9</div></div>
<div class='a' style='left:0;top:445.5px;width:32px;height:1px;background:#d0d0d0'></div>
<div class='a' style='left:0;top:396.8px;width:32px;height:48.8px;overflow:hidden'><div class='t' style='left:0;width:30px;text-align:center;top:29.2px;font-size:16.5px;color:#333'>10</div></div>
<div class='a' style='left:0;top:494.2px;width:32px;height:1px;background:#d0d0d0'></div>
<div class='a' style='left:0;top:445.5px;width:32px;height:48.8px;overflow:hidden'><div class='t' style='left:0;width:30px;text-align:center;top:29.2px;font-size:16.5px;color:#333'>11</div></div>
<div class='a' style='left:0;top:543.0px;width:32px;height:1px;background:#d0d0d0'></div>
<div class='a' style='left:0;top:494.2px;width:32px;height:48.8px;overflow:hidden'><div class='t' style='left:0;width:30px;text-align:center;top:29.2px;font-size:16.5px;color:#333'>12</div></div>
<div class='a' style='left:0;top:591.8px;width:32px;height:1px;background:#d0d0d0'></div>
<div class='a' style='left:0;top:543.0px;width:32px;height:48.8px;overflow:hidden'><div class='t' style='left:0;width:30px;text-align:center;top:29.2px;font-size:16.5px;color:#333'>13</div></div>
<div class='a' style='left:0;top:640.5px;width:32px;height:1px;background:#d0d0d0'></div>
<div class='a' style='left:0;top:591.8px;width:32px;height:48.8px;overflow:hidden'><div class='t' style='left:0;width:30px;text-align:center;top:29.2px;font-size:16.5px;color:#333'>14</div></div>
<div class='a' style='left:0;top:689.2px;width:32px;height:1px;background:#d0d0d0'></div>
<div class='a' style='left:0;top:640.5px;width:32px;height:48.8px;overflow:hidden'><div class='t' style='left:0;width:30px;text-align:center;top:29.2px;font-size:16.5px;color:#333'>15</div></div>
<div class='a' style='left:0;top:738.0px;width:32px;height:1px;background:#d0d0d0'></div>
<div class='a' style='left:0;top:689.2px;width:32px;height:48.8px;overflow:hidden'><div class='t' style='left:0;width:30px;text-align:center;top:29.2px;font-size:16.5px;color:#333'>16</div></div>
<div class='a' style='left:0;top:786.8px;width:32px;height:1px;background:#d0d0d0'></div>
<div class='a' style='left:0;top:738.0px;width:32px;height:48.8px;overflow:hidden'><div class='t' style='left:0;width:30px;text-align:center;top:29.2px;font-size:16.5px;color:#333'>17</div></div>
</div>
<div class='a' style='left:32px;top:275px;width:1866px;height:773px;background:#fff;overflow:hidden'>
<div class='a' style='left:0.0px;top:0.0px;width:1863.5px;height:75.3px;background:#706e6f'></div>
<div class='a' style='left:0.0px;top:0.0px;width:225.0px;height:773.0px;background:#706e6f'></div>
<div class='a' style='left:0.0px;top:240.4px;width:225.0px;height:62.8px;background:#c39a0b'></div>
<div class='t' style='left:11.0px;top:181.1px;font-size:14.5px;font-weight:bold;color:#f2f2f2;letter-spacing:-0.17px'>CADASTRO</div>
<div class='t' style='left:11.0px;top:348.8px;font-size:14.5px;font-weight:bold;color:#f2f2f2;letter-spacing:-0.07px'>CONTROLE DE ESTOQUE</div>
<div class='t' style='left:11.0px;top:421.3px;font-size:14.5px;font-weight:bold;color:#f2f2f2;letter-spacing:0.3px'>PEDIDO DE FUNCIONÁRIO</div>
<div class='t' style='left:11.0px;top:489.0px;font-size:14.5px;font-weight:bold;color:#f2f2f2;letter-spacing:-0.12px'>RELATÓRIOS DE</div>
<div class='t' style='left:11.0px;top:510.0px;font-size:14.5px;font-weight:bold;color:#f2f2f2;letter-spacing:0.33px'>FUNCIONÁRIOS</div>
<div class='t' style='left:19.0px;top:586.0px;font-size:14.5px;font-weight:bold;color:#f2f2f2;letter-spacing:-0.19px'>RELATÓRIOS</div>
<div class='t' style='left:11.0px;top:660.5px;font-size:14.5px;font-weight:bold;color:#f2f2f2;letter-spacing:0px'>DASHBOARDS</div>
<div class='t' style='left:11.0px;top:736.0px;font-size:14.5px;font-weight:bold;color:#f2f2f2;letter-spacing:-0.15px'>INSTRUÇÕES</div>
<div class='t' style='left:11.0px;top:256.2px;font-size:14.5px;font-weight:bold;color:#f8f2c0;letter-spacing:-0.15px'>CONTROLE DE</div>
<div class='t' style='left:11.0px;top:277.5px;font-size:14.5px;font-weight:bold;color:#f8f2c0;letter-spacing:0.4px'>ALMOXARIFADO</div>
<svg class='a' style='left:0;top:0' width='130' height='125' viewBox='0 0 130 125'>
<g stroke='#111' stroke-width='3' stroke-linejoin='round' fill='#8fc8f2'>
<path transform='translate(1.5,2)' d='M0 0 L23 0 L17 7 L28 18 L18 28 L7 17 L0 23 Z'/>
<path transform='translate(120,2) scale(-1,1)' d='M0 0 L23 0 L17 7 L28 18 L18 28 L7 17 L0 23 Z'/>
<path transform='translate(1.5,118.5) scale(1,-1)' d='M0 0 L23 0 L17 7 L28 18 L18 28 L7 17 L0 23 Z'/>
<path transform='translate(120,118.5) scale(-1,-1)' d='M0 0 L23 0 L17 7 L28 18 L18 28 L7 17 L0 23 Z'/>
</g>
<g stroke='#111' stroke-width='3.4' stroke-linejoin='round'>
<path d='M59.4 18.3 L95 39 L59.4 58.6 L23.8 39 Z' fill='#d4976c'/>
<path d='M23.8 39 L59.4 58.6 L59.4 99.5 L23.8 80 Z' fill='#efb27c'/>
<path d='M59.4 58.6 L95 39 L95 80 L59.4 99.5 Z' fill='#f6dab0'/>
</g>
<path d='M39.8 31.4 L49.3 26.6 L80.7 44.4 L71.8 49 Z' fill='#e6e6ec' stroke='#111' stroke-width='2.2' stroke-linejoin='round'/>
<path d='M71.8 49 L80.7 44.4 L80.7 63 L71.8 68 Z' fill='#efefef' stroke='#111' stroke-width='2.2' stroke-linejoin='round'/>
<path d='M29.8 51.5 L45.8 60.4 M29.8 58.6 L38 63.3' stroke='#222' stroke-width='2.8' stroke-linecap='round'/>
</svg>
<svg class='a' style='left:300px;top:0' width='400' height='60' viewBox='332 275 400 60'>
<path d='M345 305 L354.5 285.6 L494.5 285.6 L503.6 305 L494.5 325.1 L354.5 325.1 Z' fill='#cc9d0c' stroke='#efd77a' stroke-width='2'/>
<path d='M506.3 304.5 L515.5 283.7 L665 283.7 L675.5 304.5 L665 324.2 L515.5 324.2 Z' fill='#716f70' stroke='#dddddd' stroke-width='2'/>
</svg>
<div class='t' style='left:365.0px;top:25.0px;font-size:14.3px;font-weight:bold;color:#f6eeb0'>SAÍDAS</div>
<div class='t' style='left:518.0px;top:24.0px;font-size:14.3px;font-weight:bold;color:#f4f4f4'>ENTRADAS</div>
<div class='a' style='left:0.0px;top:153.5px;width:225.0px;height:1.2px;background:#878586'></div>
<div class='a' style='left:225.0px;top:153.5px;width:15.0px;height:1.0px;background:#d6d6d6'></div>
<div class='a' style='left:1396.0px;top:153.0px;width:467.5px;height:1.0px;background:#cfcfcf'></div>
<div class='a' style='left:240.0px;top:94.2px;width:112.0px;height:58.8px;background:#3b3a3a'></div>
<div class='t' style='left:251.5px;top:116.0px;font-size:16px;font-weight:bold;color:#f0f0f0;letter-spacing:-0.56px'>Data</div>
<div class='a' style='left:330.0px;top:130.0px;width:22.0px;height:23.0px;background:#f8f8f8;border:1px solid #d4d4d4'></div>
<div class='a' style='left:337px;top:139px;width:0;height:0;border-left:4px solid transparent;border-right:4px solid transparent;border-top:5px solid #555'></div>
<div class='a' style='left:356.0px;top:94.2px;width:239.5px;height:58.8px;background:#3b3a3a'></div>
<div class='t' style='left:367.5px;top:116.0px;font-size:16px;font-weight:bold;color:#f0f0f0;letter-spacing:0.17px'>Produto / Material</div>
<div class='a' style='left:573.5px;top:130.0px;width:22.0px;height:23.0px;background:#f8f8f8;border:1px solid #d4d4d4'></div>
<div class='a' style='left:580.5px;top:139px;width:0;height:0;border-left:4px solid transparent;border-right:4px solid transparent;border-top:5px solid #555'></div>
<div class='a' style='left:599.5px;top:94.2px;width:124.0px;height:58.8px;background:#3b3a3a'></div>
<div class='t' style='left:611.0px;top:116.0px;font-size:16px;font-weight:bold;color:#f0f0f0;letter-spacing:-0.22px'>Quantidade</div>
<div class='a' style='left:701.5px;top:130.0px;width:22.0px;height:23.0px;background:#f8f8f8;border:1px solid #d4d4d4'></div>
<div class='a' style='left:708.5px;top:139px;width:0;height:0;border-left:4px solid transparent;border-right:4px solid transparent;border-top:5px solid #555'></div>
<div class='a' style='left:727.5px;top:94.2px;width:236.5px;height:58.8px;background:#3b3a3a'></div>
<div class='t' style='left:739.0px;top:116.0px;font-size:16px;font-weight:bold;color:#f0f0f0;letter-spacing:-0.66px'>Funcionário</div>
<div class='a' style='left:942.0px;top:130.0px;width:22.0px;height:23.0px;background:#f8f8f8;border:1px solid #d4d4d4'></div>
<div class='a' style='left:949px;top:139px;width:0;height:0;border-left:4px solid transparent;border-right:4px solid transparent;border-top:5px solid #555'></div>
<div class='a' style='left:968.0px;top:94.2px;width:138.0px;height:58.8px;background:#3b3a3a'></div>
<div class='t' style='left:979.5px;top:104.0px;font-size:16px;font-weight:bold;color:#f0f0f0;letter-spacing:-0.22px'>Quantidade</div>
<div class='t' style='left:979.5px;top:128.3px;font-size:16px;font-weight:bold;color:#f0f0f0;letter-spacing:-0.51px'>Devolvida</div>
<div class='a' style='left:1084.0px;top:130.0px;width:22.0px;height:23.0px;background:#f8f8f8;border:1px solid #d4d4d4'></div>
<div class='a' style='left:1091px;top:139px;width:0;height:0;border-left:4px solid transparent;border-right:4px solid transparent;border-top:5px solid #555'></div>
<div class='a' style='left:1110.0px;top:94.2px;width:136.0px;height:58.8px;background:#3b3a3a'></div>
<div class='t' style='left:1121.5px;top:104.0px;font-size:16px;font-weight:bold;color:#f0f0f0;letter-spacing:-0.2px'>Data de</div>
<div class='t' style='left:1121.5px;top:128.3px;font-size:16px;font-weight:bold;color:#f0f0f0;letter-spacing:-0.64px'>Devolução</div>
<div class='a' style='left:1224.0px;top:130.0px;width:22.0px;height:23.0px;background:#f8f8f8;border:1px solid #d4d4d4'></div>
<div class='a' style='left:1231px;top:139px;width:0;height:0;border-left:4px solid transparent;border-right:4px solid transparent;border-top:5px solid #555'></div>
<div class='a' style='left:1250.0px;top:94.2px;width:144.0px;height:58.8px;background:#3b3a3a'></div>
<div class='t' style='left:1261.5px;top:104.0px;font-size:16px;font-weight:bold;color:#f0f0f0;letter-spacing:-0.16px'>Quantidade Não</div>
<div class='t' style='left:1261.5px;top:128.3px;font-size:16px;font-weight:bold;color:#f0f0f0;letter-spacing:-0.51px'>Devolvida</div>
<div class='a' style='left:1372.0px;top:130.0px;width:22.0px;height:23.0px;background:#f8f8f8;border:1px solid #d4d4d4'></div>
<div class='a' style='left:1379px;top:139px;width:0;height:0;border-left:4px solid transparent;border-right:4px solid transparent;border-top:5px solid #555'></div>
<div class='a' style='left:1250.0px;top:154.5px;width:145.0px;height:46.2px;background:#d9d8d8'></div>
<div class='a' style='left:238.0px;top:201.8px;width:1010.0px;height:1.0px;background:#dcdcdc'></div>
<div class='t' style='left:252.0px;top:170.0px;font-size:17px;color:#444;letter-spacing:0.5px'>01/01/2023</div>
<div class='t' style='left:368.0px;top:170.0px;font-size:17px;color:#444;letter-spacing:0.3px'>produto 01</div>
<div class='t' style='left:611.5px;top:170.0px;font-size:17px;color:#444;letter-spacing:0.3px'>5</div>
<div class='t' style='left:739.5px;top:170.0px;font-size:17px;color:#444;letter-spacing:0.3px'>Funcionario 01</div>
<div class='t' style='left:980.0px;top:170.0px;font-size:17px;color:#444;letter-spacing:0.3px'>1</div>
<div class='t' style='left:1122.0px;top:170.0px;font-size:17px;color:#444;letter-spacing:0.5px'>01/01/2023</div>
<div class='t' style='left:1262.0px;top:170.0px;font-size:17px;color:#444;letter-spacing:0.3px'>4</div>
<div class='a' style='left:1109px;top:154.0px;width:0;height:0;border-top:7px solid #1e7a1e;border-right:7px solid transparent'></div>
<div class='a' style='left:1250.0px;top:203.2px;width:145.0px;height:46.2px;background:#d9d8d8'></div>
<div class='a' style='left:238.0px;top:250.5px;width:1010.0px;height:1.0px;background:#dcdcdc'></div>
<div class='t' style='left:252.0px;top:218.8px;font-size:17px;color:#444;letter-spacing:0.5px'>11/01/2023</div>
<div class='t' style='left:368.0px;top:218.8px;font-size:17px;color:#444;letter-spacing:0.3px'>produto 02</div>
<div class='t' style='left:611.5px;top:218.8px;font-size:17px;color:#444;letter-spacing:0.3px'>6</div>
<div class='t' style='left:739.5px;top:218.8px;font-size:17px;color:#444;letter-spacing:0.3px'>Funcionario 01</div>
<div class='t' style='left:980.0px;top:218.8px;font-size:17px;color:#444;letter-spacing:0.3px'>2</div>
<div class='t' style='left:1122.0px;top:218.8px;font-size:17px;color:#444;letter-spacing:0.5px'>11/01/2023</div>
<div class='t' style='left:1262.0px;top:218.8px;font-size:17px;color:#444;letter-spacing:0.3px'>4</div>
<div class='a' style='left:239px;top:202.8px;width:0;height:0;border-top:7px solid #1e7a1e;border-right:7px solid transparent'></div>
<div class='a' style='left:598.5px;top:202.8px;width:0;height:0;border-top:7px solid #1e7a1e;border-right:7px solid transparent'></div>
<div class='a' style='left:967px;top:202.8px;width:0;height:0;border-top:7px solid #1e7a1e;border-right:7px solid transparent'></div>
<div class='a' style='left:1109px;top:202.8px;width:0;height:0;border-top:7px solid #1e7a1e;border-right:7px solid transparent'></div>
<div class='a' style='left:1250.0px;top:252.0px;width:145.0px;height:46.2px;background:#d9d8d8'></div>
<div class='a' style='left:238.0px;top:299.2px;width:1010.0px;height:1.0px;background:#dcdcdc'></div>
<div class='t' style='left:252.0px;top:267.5px;font-size:17px;color:#444;letter-spacing:0.5px'>21/01/2023</div>
<div class='t' style='left:368.0px;top:267.5px;font-size:17px;color:#444;letter-spacing:0.3px'>produto 03</div>
<div class='t' style='left:611.5px;top:267.5px;font-size:17px;color:#444;letter-spacing:0.3px'>7</div>
<div class='t' style='left:739.5px;top:267.5px;font-size:17px;color:#444;letter-spacing:0.3px'>Funcionario 01</div>
<div class='t' style='left:980.0px;top:267.5px;font-size:17px;color:#444;letter-spacing:0.3px'>3</div>
<div class='t' style='left:1122.0px;top:267.5px;font-size:17px;color:#444;letter-spacing:0.5px'>21/01/2023</div>
<div class='t' style='left:1262.0px;top:267.5px;font-size:17px;color:#444;letter-spacing:0.3px'>4</div>
<div class='a' style='left:239px;top:251.5px;width:0;height:0;border-top:7px solid #1e7a1e;border-right:7px solid transparent'></div>
<div class='a' style='left:598.5px;top:251.5px;width:0;height:0;border-top:7px solid #1e7a1e;border-right:7px solid transparent'></div>
<div class='a' style='left:967px;top:251.5px;width:0;height:0;border-top:7px solid #1e7a1e;border-right:7px solid transparent'></div>
<div class='a' style='left:1109px;top:251.5px;width:0;height:0;border-top:7px solid #1e7a1e;border-right:7px solid transparent'></div>
<div class='a' style='left:1250.0px;top:300.8px;width:145.0px;height:46.2px;background:#d9d8d8'></div>
<div class='a' style='left:238.0px;top:348.0px;width:1010.0px;height:1.0px;background:#dcdcdc'></div>
<div class='t' style='left:252.0px;top:316.2px;font-size:17px;color:#444;letter-spacing:0.5px'>31/01/2023</div>
<div class='t' style='left:368.0px;top:316.2px;font-size:17px;color:#444;letter-spacing:0.3px'>produto 04</div>
<div class='t' style='left:611.5px;top:316.2px;font-size:17px;color:#444;letter-spacing:0.3px'>8</div>
<div class='t' style='left:739.5px;top:316.2px;font-size:17px;color:#444;letter-spacing:0.3px'>Funcionario 01</div>
<div class='t' style='left:980.0px;top:316.2px;font-size:17px;color:#444;letter-spacing:0.3px'>4</div>
<div class='t' style='left:1122.0px;top:316.2px;font-size:17px;color:#444;letter-spacing:0.5px'>31/01/2023</div>
<div class='t' style='left:1262.0px;top:316.2px;font-size:17px;color:#444;letter-spacing:0.3px'>4</div>
<div class='a' style='left:239px;top:300.2px;width:0;height:0;border-top:7px solid #1e7a1e;border-right:7px solid transparent'></div>
<div class='a' style='left:598.5px;top:300.2px;width:0;height:0;border-top:7px solid #1e7a1e;border-right:7px solid transparent'></div>
<div class='a' style='left:967px;top:300.2px;width:0;height:0;border-top:7px solid #1e7a1e;border-right:7px solid transparent'></div>
<div class='a' style='left:1109px;top:300.2px;width:0;height:0;border-top:7px solid #1e7a1e;border-right:7px solid transparent'></div>
<div class='a' style='left:1250.0px;top:349.5px;width:145.0px;height:46.2px;background:#d9d8d8'></div>
<div class='a' style='left:238.0px;top:396.8px;width:1010.0px;height:1.0px;background:#dcdcdc'></div>
<div class='t' style='left:252.0px;top:365.0px;font-size:17px;color:#444;letter-spacing:0.5px'>10/02/2023</div>
<div class='t' style='left:368.0px;top:365.0px;font-size:17px;color:#444;letter-spacing:0.3px'>produto 01</div>
<div class='t' style='left:611.5px;top:365.0px;font-size:17px;color:#444;letter-spacing:0.3px'>9</div>
<div class='t' style='left:739.5px;top:365.0px;font-size:17px;color:#444;letter-spacing:0.3px'>Funcionario 01</div>
<div class='t' style='left:980.0px;top:365.0px;font-size:17px;color:#444;letter-spacing:0.3px'>5</div>
<div class='t' style='left:1122.0px;top:365.0px;font-size:17px;color:#444;letter-spacing:0.5px'>10/02/2023</div>
<div class='t' style='left:1262.0px;top:365.0px;font-size:17px;color:#444;letter-spacing:0.3px'>4</div>
<div class='a' style='left:239px;top:349.0px;width:0;height:0;border-top:7px solid #1e7a1e;border-right:7px solid transparent'></div>
<div class='a' style='left:598.5px;top:349.0px;width:0;height:0;border-top:7px solid #1e7a1e;border-right:7px solid transparent'></div>
<div class='a' style='left:967px;top:349.0px;width:0;height:0;border-top:7px solid #1e7a1e;border-right:7px solid transparent'></div>
<div class='a' style='left:1109px;top:349.0px;width:0;height:0;border-top:7px solid #1e7a1e;border-right:7px solid transparent'></div>
<div class='a' style='left:1250.0px;top:398.2px;width:145.0px;height:46.2px;background:#d9d8d8'></div>
<div class='a' style='left:238.0px;top:445.5px;width:1010.0px;height:1.0px;background:#dcdcdc'></div>
<div class='t' style='left:252.0px;top:413.8px;font-size:17px;color:#444;letter-spacing:0.5px'>20/02/2023</div>
<div class='t' style='left:368.0px;top:413.8px;font-size:17px;color:#444;letter-spacing:0.3px'>produto 02</div>
<div class='t' style='left:611.5px;top:413.8px;font-size:17px;color:#444;letter-spacing:0.3px'>10</div>
<div class='t' style='left:739.5px;top:413.8px;font-size:17px;color:#444;letter-spacing:0.3px'>Funcionario 01</div>
<div class='t' style='left:980.0px;top:413.8px;font-size:17px;color:#444;letter-spacing:0.3px'>6</div>
<div class='t' style='left:1122.0px;top:413.8px;font-size:17px;color:#444;letter-spacing:0.5px'>20/02/2023</div>
<div class='t' style='left:1262.0px;top:413.8px;font-size:17px;color:#444;letter-spacing:0.3px'>4</div>
<div class='a' style='left:239px;top:397.8px;width:0;height:0;border-top:7px solid #1e7a1e;border-right:7px solid transparent'></div>
<div class='a' style='left:598.5px;top:397.8px;width:0;height:0;border-top:7px solid #1e7a1e;border-right:7px solid transparent'></div>
<div class='a' style='left:967px;top:397.8px;width:0;height:0;border-top:7px solid #1e7a1e;border-right:7px solid transparent'></div>
<div class='a' style='left:1109px;top:397.8px;width:0;height:0;border-top:7px solid #1e7a1e;border-right:7px solid transparent'></div>
<div class='a' style='left:1250.0px;top:447.0px;width:145.0px;height:46.2px;background:#d9d8d8'></div>
<div class='a' style='left:238.0px;top:494.2px;width:1010.0px;height:1.0px;background:#dcdcdc'></div>
<div class='t' style='left:252.0px;top:462.5px;font-size:17px;color:#444;letter-spacing:0.5px'>02/03/2023</div>
<div class='t' style='left:368.0px;top:462.5px;font-size:17px;color:#444;letter-spacing:0.3px'>produto 03</div>
<div class='t' style='left:611.5px;top:462.5px;font-size:17px;color:#444;letter-spacing:0.3px'>11</div>
<div class='t' style='left:739.5px;top:462.5px;font-size:17px;color:#444;letter-spacing:0.3px'>Funcionario 01</div>
<div class='t' style='left:980.0px;top:462.5px;font-size:17px;color:#444;letter-spacing:0.3px'>7</div>
<div class='t' style='left:1122.0px;top:462.5px;font-size:17px;color:#444;letter-spacing:0.5px'>02/03/2023</div>
<div class='t' style='left:1262.0px;top:462.5px;font-size:17px;color:#444;letter-spacing:0.3px'>4</div>
<div class='a' style='left:239px;top:446.5px;width:0;height:0;border-top:7px solid #1e7a1e;border-right:7px solid transparent'></div>
<div class='a' style='left:598.5px;top:446.5px;width:0;height:0;border-top:7px solid #1e7a1e;border-right:7px solid transparent'></div>
<div class='a' style='left:967px;top:446.5px;width:0;height:0;border-top:7px solid #1e7a1e;border-right:7px solid transparent'></div>
<div class='a' style='left:1109px;top:446.5px;width:0;height:0;border-top:7px solid #1e7a1e;border-right:7px solid transparent'></div>
<div class='a' style='left:1250.0px;top:495.8px;width:145.0px;height:46.2px;background:#d9d8d8'></div>
<div class='a' style='left:238.0px;top:543.0px;width:1010.0px;height:1.0px;background:#dcdcdc'></div>
<div class='t' style='left:252.0px;top:511.2px;font-size:17px;color:#444;letter-spacing:0.5px'>12/03/2023</div>
<div class='t' style='left:368.0px;top:511.2px;font-size:17px;color:#444;letter-spacing:0.3px'>produto 04</div>
<div class='t' style='left:611.5px;top:511.2px;font-size:17px;color:#444;letter-spacing:0.3px'>12</div>
<div class='t' style='left:739.5px;top:511.2px;font-size:17px;color:#444;letter-spacing:0.3px'>Funcionario 01</div>
<div class='t' style='left:980.0px;top:511.2px;font-size:17px;color:#444;letter-spacing:0.3px'>8</div>
<div class='t' style='left:1122.0px;top:511.2px;font-size:17px;color:#444;letter-spacing:0.5px'>12/03/2023</div>
<div class='t' style='left:1262.0px;top:511.2px;font-size:17px;color:#444;letter-spacing:0.3px'>4</div>
<div class='a' style='left:239px;top:495.2px;width:0;height:0;border-top:7px solid #1e7a1e;border-right:7px solid transparent'></div>
<div class='a' style='left:598.5px;top:495.2px;width:0;height:0;border-top:7px solid #1e7a1e;border-right:7px solid transparent'></div>
<div class='a' style='left:967px;top:495.2px;width:0;height:0;border-top:7px solid #1e7a1e;border-right:7px solid transparent'></div>
<div class='a' style='left:1109px;top:495.2px;width:0;height:0;border-top:7px solid #1e7a1e;border-right:7px solid transparent'></div>
<div class='a' style='left:1250.0px;top:544.5px;width:145.0px;height:46.2px;background:#d9d8d8'></div>
<div class='a' style='left:238.0px;top:591.8px;width:1010.0px;height:1.0px;background:#dcdcdc'></div>
<div class='t' style='left:252.0px;top:560.0px;font-size:17px;color:#444;letter-spacing:0.5px'>22/03/2023</div>
<div class='t' style='left:368.0px;top:560.0px;font-size:17px;color:#444;letter-spacing:0.3px'>produto 01</div>
<div class='t' style='left:611.5px;top:560.0px;font-size:17px;color:#444;letter-spacing:0.3px'>13</div>
<div class='t' style='left:739.5px;top:560.0px;font-size:17px;color:#444;letter-spacing:0.3px'>Funcionario 01</div>
<div class='t' style='left:980.0px;top:560.0px;font-size:17px;color:#444;letter-spacing:0.3px'>9</div>
<div class='t' style='left:1122.0px;top:560.0px;font-size:17px;color:#444;letter-spacing:0.5px'>22/03/2023</div>
<div class='t' style='left:1262.0px;top:560.0px;font-size:17px;color:#444;letter-spacing:0.3px'>4</div>
<div class='a' style='left:239px;top:544.0px;width:0;height:0;border-top:7px solid #1e7a1e;border-right:7px solid transparent'></div>
<div class='a' style='left:598.5px;top:544.0px;width:0;height:0;border-top:7px solid #1e7a1e;border-right:7px solid transparent'></div>
<div class='a' style='left:967px;top:544.0px;width:0;height:0;border-top:7px solid #1e7a1e;border-right:7px solid transparent'></div>
<div class='a' style='left:1109px;top:544.0px;width:0;height:0;border-top:7px solid #1e7a1e;border-right:7px solid transparent'></div>
<div class='a' style='left:1250.0px;top:593.2px;width:145.0px;height:46.2px;background:#d9d8d8'></div>
<div class='a' style='left:238.0px;top:640.5px;width:1010.0px;height:1.0px;background:#dcdcdc'></div>
<div class='t' style='left:252.0px;top:608.8px;font-size:17px;color:#444;letter-spacing:0.5px'>01/04/2023</div>
<div class='t' style='left:368.0px;top:608.8px;font-size:17px;color:#444;letter-spacing:0.3px'>produto 01</div>
<div class='t' style='left:611.5px;top:608.8px;font-size:17px;color:#444;letter-spacing:0.3px'>14</div>
<div class='t' style='left:739.5px;top:608.8px;font-size:17px;color:#444;letter-spacing:0.3px'>Funcionario 01</div>
<div class='t' style='left:980.0px;top:608.8px;font-size:17px;color:#444;letter-spacing:0.3px'>10</div>
<div class='t' style='left:1122.0px;top:608.8px;font-size:17px;color:#444;letter-spacing:0.5px'>01/04/2023</div>
<div class='t' style='left:1262.0px;top:608.8px;font-size:17px;color:#444;letter-spacing:0.3px'>4</div>
<div class='a' style='left:239px;top:592.8px;width:0;height:0;border-top:7px solid #1e7a1e;border-right:7px solid transparent'></div>
<div class='a' style='left:598.5px;top:592.8px;width:0;height:0;border-top:7px solid #1e7a1e;border-right:7px solid transparent'></div>
<div class='a' style='left:967px;top:592.8px;width:0;height:0;border-top:7px solid #1e7a1e;border-right:7px solid transparent'></div>
<div class='a' style='left:1109px;top:592.8px;width:0;height:0;border-top:7px solid #1e7a1e;border-right:7px solid transparent'></div>
<div class='a' style='left:1250.0px;top:642.0px;width:145.0px;height:46.2px;background:#d9d8d8'></div>
<div class='a' style='left:238.0px;top:689.2px;width:1010.0px;height:1.0px;background:#dcdcdc'></div>
<div class='t' style='left:252.0px;top:657.5px;font-size:17px;color:#444;letter-spacing:0.5px'>11/04/2023</div>
<div class='t' style='left:368.0px;top:657.5px;font-size:17px;color:#444;letter-spacing:0.3px'>produto 02</div>
<div class='t' style='left:611.5px;top:657.5px;font-size:17px;color:#444;letter-spacing:0.3px'>15</div>
<div class='t' style='left:739.5px;top:657.5px;font-size:17px;color:#444;letter-spacing:0.3px'>Funcionario 01</div>
<div class='t' style='left:980.0px;top:657.5px;font-size:17px;color:#444;letter-spacing:0.3px'>11</div>
<div class='t' style='left:1122.0px;top:657.5px;font-size:17px;color:#444;letter-spacing:0.5px'>11/04/2023</div>
<div class='t' style='left:1262.0px;top:657.5px;font-size:17px;color:#444;letter-spacing:0.3px'>4</div>
<div class='a' style='left:239px;top:641.5px;width:0;height:0;border-top:7px solid #1e7a1e;border-right:7px solid transparent'></div>
<div class='a' style='left:598.5px;top:641.5px;width:0;height:0;border-top:7px solid #1e7a1e;border-right:7px solid transparent'></div>
<div class='a' style='left:967px;top:641.5px;width:0;height:0;border-top:7px solid #1e7a1e;border-right:7px solid transparent'></div>
<div class='a' style='left:1109px;top:641.5px;width:0;height:0;border-top:7px solid #1e7a1e;border-right:7px solid transparent'></div>
<div class='a' style='left:1250.0px;top:690.8px;width:145.0px;height:46.2px;background:#d9d8d8'></div>
<div class='a' style='left:238.0px;top:738.0px;width:1010.0px;height:1.0px;background:#dcdcdc'></div>
<div class='t' style='left:252.0px;top:706.2px;font-size:17px;color:#444;letter-spacing:0.5px'>21/04/2023</div>
<div class='t' style='left:368.0px;top:706.2px;font-size:17px;color:#444;letter-spacing:0.3px'>produto 03</div>
<div class='t' style='left:611.5px;top:706.2px;font-size:17px;color:#444;letter-spacing:0.3px'>16</div>
<div class='t' style='left:739.5px;top:706.2px;font-size:17px;color:#444;letter-spacing:0.3px'>Funcionario 01</div>
<div class='t' style='left:980.0px;top:706.2px;font-size:17px;color:#444;letter-spacing:0.3px'>12</div>
<div class='t' style='left:1122.0px;top:706.2px;font-size:17px;color:#444;letter-spacing:0.5px'>21/04/2023</div>
<div class='t' style='left:1262.0px;top:706.2px;font-size:17px;color:#444;letter-spacing:0.3px'>4</div>
<div class='a' style='left:239px;top:690.2px;width:0;height:0;border-top:7px solid #1e7a1e;border-right:7px solid transparent'></div>
<div class='a' style='left:598.5px;top:690.2px;width:0;height:0;border-top:7px solid #1e7a1e;border-right:7px solid transparent'></div>
<div class='a' style='left:967px;top:690.2px;width:0;height:0;border-top:7px solid #1e7a1e;border-right:7px solid transparent'></div>
<div class='a' style='left:1109px;top:690.2px;width:0;height:0;border-top:7px solid #1e7a1e;border-right:7px solid transparent'></div>
<div class='a' style='left:1250.0px;top:739.5px;width:145.0px;height:46.2px;background:#d9d8d8'></div>
<div class='a' style='left:238.0px;top:786.8px;width:1010.0px;height:1.0px;background:#dcdcdc'></div>
<div class='t' style='left:252.0px;top:755.0px;font-size:17px;color:#444;letter-spacing:0.5px'>01/05/2023</div>
<div class='t' style='left:368.0px;top:755.0px;font-size:17px;color:#444;letter-spacing:0.3px'>produto 04</div>
<div class='t' style='left:611.5px;top:755.0px;font-size:17px;color:#444;letter-spacing:0.3px'>17</div>
<div class='t' style='left:739.5px;top:755.0px;font-size:17px;color:#444;letter-spacing:0.3px'>Funcionario 01</div>
<div class='t' style='left:980.0px;top:755.0px;font-size:17px;color:#444;letter-spacing:0.3px'>13</div>
<div class='t' style='left:1122.0px;top:755.0px;font-size:17px;color:#444;letter-spacing:0.5px'>01/05/2023</div>
<div class='t' style='left:1262.0px;top:755.0px;font-size:17px;color:#444;letter-spacing:0.3px'>4</div>
<div class='a' style='left:239px;top:739.0px;width:0;height:0;border-top:7px solid #1e7a1e;border-right:7px solid transparent'></div>
<div class='a' style='left:598.5px;top:739.0px;width:0;height:0;border-top:7px solid #1e7a1e;border-right:7px solid transparent'></div>
<div class='a' style='left:967px;top:739.0px;width:0;height:0;border-top:7px solid #1e7a1e;border-right:7px solid transparent'></div>
<div class='a' style='left:1109px;top:739.0px;width:0;height:0;border-top:7px solid #1e7a1e;border-right:7px solid transparent'></div>
<div class='a' style='left:238.0px;top:153.0px;width:1.0px;height:620.0px;background:#dcdcdc'></div>
<div class='a' style='left:354.0px;top:153.0px;width:1.0px;height:620.0px;background:#dcdcdc'></div>
<div class='a' style='left:597.5px;top:153.0px;width:1.0px;height:620.0px;background:#dcdcdc'></div>
<div class='a' style='left:725.5px;top:153.0px;width:1.0px;height:620.0px;background:#dcdcdc'></div>
<div class='a' style='left:966.0px;top:153.0px;width:1.0px;height:620.0px;background:#dcdcdc'></div>
<div class='a' style='left:1108.0px;top:153.0px;width:1.0px;height:620.0px;background:#dcdcdc'></div>
<div class='a' style='left:1248.0px;top:153.0px;width:1.0px;height:620.0px;background:#dcdcdc'></div>
</div>
<div class='a' style='left:1898px;top:248px;width:22px;height:806px;background:#f3f3f3'></div>
<svg class='a' style='left:1904px;top:258px;' width='14' height='11' viewBox='0 0 14 11'><path d='M1 10 L7 2 L13 10 Z' fill='#6a6a6a'/></svg>
<div class='a' style='left:1905.5px;top:276px;width:11px;height:22px;border-radius:6px;background:#6e6e6e'></div>
<svg class='a' style='left:1904px;top:1035px;' width='14' height='11' viewBox='0 0 14 11'><path d='M1 1 L7 9 L13 1 Z' fill='#6a6a6a'/></svg>
</body></html>
